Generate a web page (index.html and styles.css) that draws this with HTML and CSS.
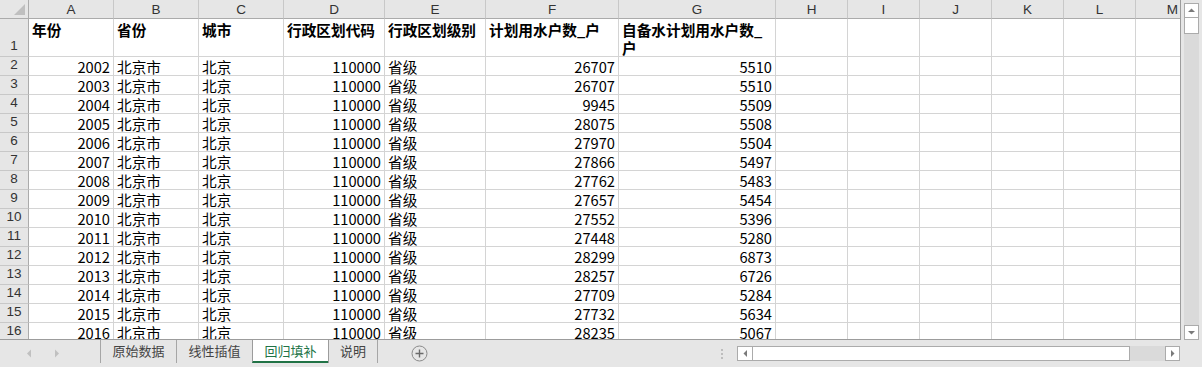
FILE: index.html
```html
<!DOCTYPE html>
<html lang="zh-CN">
<head>
<meta charset="utf-8">
<title>回归填补</title>
<link rel="stylesheet" href="styles.css">
</head>
<body>
<div class="app">
  <div class="main">
    <div class="sheet">
      <div class="row head">
        <div class="corner"><svg width="28" height="18" viewBox="0 0 28 18"><polygon points="14,15 25,15 25,4" fill="#bfbfbf"/></svg></div>
        <div>A</div><div>B</div><div>C</div><div>D</div><div>E</div><div>F</div><div>G</div><div>H</div><div>I</div><div>J</div><div>K</div><div>L</div><div class="m">M</div>
      </div>
      <div class="row r1">
        <div class="rh">1</div>
        <div>年份</div><div>省份</div><div>城市</div><div>行政区划代码</div><div>行政区划级别</div><div>计划用水户数_户</div><div>自备水计划用水户数_<br>户</div><div></div><div></div><div></div><div></div><div></div><div></div>
      </div>
      <div class="row"><div class="rh">2</div><div class="n">2002</div><div>北京市</div><div>北京</div><div class="n">110000</div><div>省级</div><div class="n">26707</div><div class="n">5510</div><div></div><div></div><div></div><div></div><div></div><div></div></div>
      <div class="row"><div class="rh">3</div><div class="n">2003</div><div>北京市</div><div>北京</div><div class="n">110000</div><div>省级</div><div class="n">26707</div><div class="n">5510</div><div></div><div></div><div></div><div></div><div></div><div></div></div>
      <div class="row"><div class="rh">4</div><div class="n">2004</div><div>北京市</div><div>北京</div><div class="n">110000</div><div>省级</div><div class="n">9945</div><div class="n">5509</div><div></div><div></div><div></div><div></div><div></div><div></div></div>
      <div class="row"><div class="rh">5</div><div class="n">2005</div><div>北京市</div><div>北京</div><div class="n">110000</div><div>省级</div><div class="n">28075</div><div class="n">5508</div><div></div><div></div><div></div><div></div><div></div><div></div></div>
      <div class="row"><div class="rh">6</div><div class="n">2006</div><div>北京市</div><div>北京</div><div class="n">110000</div><div>省级</div><div class="n">27970</div><div class="n">5504</div><div></div><div></div><div></div><div></div><div></div><div></div></div>
      <div class="row"><div class="rh">7</div><div class="n">2007</div><div>北京市</div><div>北京</div><div class="n">110000</div><div>省级</div><div class="n">27866</div><div class="n">5497</div><div></div><div></div><div></div><div></div><div></div><div></div></div>
      <div class="row"><div class="rh">8</div><div class="n">2008</div><div>北京市</div><div>北京</div><div class="n">110000</div><div>省级</div><div class="n">27762</div><div class="n">5483</div><div></div><div></div><div></div><div></div><div></div><div></div></div>
      <div class="row"><div class="rh">9</div><div class="n">2009</div><div>北京市</div><div>北京</div><div class="n">110000</div><div>省级</div><div class="n">27657</div><div class="n">5454</div><div></div><div></div><div></div><div></div><div></div><div></div></div>
      <div class="row"><div class="rh">10</div><div class="n">2010</div><div>北京市</div><div>北京</div><div class="n">110000</div><div>省级</div><div class="n">27552</div><div class="n">5396</div><div></div><div></div><div></div><div></div><div></div><div></div></div>
      <div class="row"><div class="rh">11</div><div class="n">2011</div><div>北京市</div><div>北京</div><div class="n">110000</div><div>省级</div><div class="n">27448</div><div class="n">5280</div><div></div><div></div><div></div><div></div><div></div><div></div></div>
      <div class="row"><div class="rh">12</div><div class="n">2012</div><div>北京市</div><div>北京</div><div class="n">110000</div><div>省级</div><div class="n">28299</div><div class="n">6873</div><div></div><div></div><div></div><div></div><div></div><div></div></div>
      <div class="row"><div class="rh">13</div><div class="n">2013</div><div>北京市</div><div>北京</div><div class="n">110000</div><div>省级</div><div class="n">28257</div><div class="n">6726</div><div></div><div></div><div></div><div></div><div></div><div></div></div>
      <div class="row"><div class="rh">14</div><div class="n">2014</div><div>北京市</div><div>北京</div><div class="n">110000</div><div>省级</div><div class="n">27709</div><div class="n">5284</div><div></div><div></div><div></div><div></div><div></div><div></div></div>
      <div class="row"><div class="rh">15</div><div class="n">2015</div><div>北京市</div><div>北京</div><div class="n">110000</div><div>省级</div><div class="n">27732</div><div class="n">5634</div><div></div><div></div><div></div><div></div><div></div><div></div></div>
      <div class="row"><div class="rh">16</div><div class="n">2016</div><div>北京市</div><div>北京</div><div class="n">110000</div><div>省级</div><div class="n">28235</div><div class="n">5067</div><div></div><div></div><div></div><div></div><div></div><div></div></div>
    </div>
    <div class="vscroll">
      <div class="sbtn"><svg width="13" height="13" viewBox="0 0 13 13"><polygon points="3,8 10,8 6.5,4.5" fill="#7a7a7a"/></svg></div>
      <div class="vthumb"></div>
      <div class="vtrack"></div>
      <div class="sbtn"><svg width="13" height="13" viewBox="0 0 13 13"><polygon points="3,5 10,5 6.5,8.5" fill="#7a7a7a"/></svg></div>
    </div>
  </div>
  <div class="tabbar">
    <div class="nav">
      <svg class="navl" width="6" height="9" viewBox="0 0 6 9"><polygon points="5,0.5 5,8.5 1,4.5" fill="#c0c0c0"/></svg>
      <svg class="navr" width="6" height="9" viewBox="0 0 6 9"><polygon points="1,0.5 1,8.5 5,4.5" fill="#c0c0c0"/></svg>
    </div>
    <div class="tabs">
      <div class="tab">原始数据</div>
      <div class="tab">线性插值</div>
      <div class="tab active">回归填补</div>
      <div class="tab last">说明</div>
    </div>
    <svg class="plus" width="17" height="17" viewBox="0 0 17 17"><circle cx="8.5" cy="8.5" r="7.5" fill="none" stroke="#8a8a8a" stroke-width="1"/><path d="M8.5 4.5v8M4.5 8.5h8" stroke="#6a6a6a" stroke-width="1.4"/></svg>
    <div class="dots"><i></i><i></i><i></i></div>
    <div class="hscroll">
      <div class="hbtn"><svg width="13" height="13" viewBox="0 0 13 13"><polygon points="8,3 8,10 4.5,6.5" fill="#7a7a7a"/></svg></div>
      <div class="hthumb"></div>
      <div class="htrack"></div>
      <div class="hbtn right"><svg width="13" height="13" viewBox="0 0 13 13"><polygon points="5,3 5,10 8.5,6.5" fill="#7a7a7a"/></svg></div>
    </div>
  </div>
</div>
</body>
</html>
```
FILE: styles.css
```css
* { box-sizing: border-box; }
html, body { margin: 0; padding: 0; }
body {
  background: #e6e6e6;
  font-family: "Noto Sans CJK SC", "Noto Sans", sans-serif;
  color: #000;
}
.app { width: 1202px; height: 367px; overflow: hidden; display: flex; flex-direction: column; }
.main { display: flex; height: 340px; }
.sheet {
  width: 1181px;
  height: 340px;
  background: #fff;
  border-right: 1px solid #9c9c9c;
  border-bottom: 1px solid #9c9c9c;
  overflow: hidden;
}
.row {
  display: grid;
  grid-template-columns: 29px 85px 85px 85px 101px 101px 133px 157px 72px 72px 72px 72px 72px 44px;
  height: 19px;
  font-size: 14.67px;
}
.row > div {
  border-right: 1px solid #d4d4d4;
  border-bottom: 1px solid #d4d4d4;
  padding: 0 3px;
  display: flex;
  align-items: flex-end;
  line-height: 16px;
  white-space: nowrap;
  overflow: hidden;
}
.row > div:last-child { border-right: none; }
.row > .n { justify-content: flex-end; padding-right: 3px; }
.row > .rh {
  background: #e6e6e6;
  border-right: 1px solid #ababab;
  border-bottom: 1px solid #c8c8c8;
  justify-content: center;
  font-family: "Liberation Sans", sans-serif;
  font-size: 13.5px;
  color: #333;
  padding: 0 0 2px 0;
}
.head > div {
  background: #e6e6e6;
  border-right: 1px solid #c8c8c8;
  border-bottom: 1px solid #ababab;
  justify-content: center;
  align-items: flex-start;
  font-family: "Liberation Sans", sans-serif;
  font-size: 13.5px;
  color: #333;
  padding: 1px 0 0 0;
  line-height: 18px;
}
.head > .m { justify-content: flex-end; padding-right: 2px; }
.head > .corner { border-right: 1px solid #ababab; padding: 0; display: block; }
.corner svg { display: block; }
.r1 { height: 38px; }
.r1 > div {
  align-items: flex-start;
  font-weight: bold;
  line-height: 18px;
  padding-top: 2px;
}
.r1 > .rh { align-items: flex-end; font-weight: normal; line-height: 16px; padding-top: 0; }

.vscroll {
  width: 21px;
  height: 340px;
  padding: 3px 0 0 3px;
  display: flex;
  flex-direction: column;
}
.vscroll > div { width: 15px; }
.sbtn {
  height: 15px;
  background: #fff;
  border: 1px solid #ababab;
  display: flex; align-items: center; justify-content: center;
}
.vthumb { height: 17px; background: #fff; border: 1px solid #ababab; margin-top: -1px; }
.vtrack { flex: 1; background: #dadada; }

.tabbar { height: 27px; display: flex; align-items: center; font-size: 13px; }
.nav { width: 100px; height: 27px; position: relative; display: flex; align-items: center; }
.navl { margin-left: 26px; }
.navr { margin-left: 22px; }
.tabs { display: flex; align-self: flex-start; height: 23px; }
.tab {
  width: 76px;
  height: 23px;
  border-left: 1px solid #a6a6a6;
  color: #444;
  display: flex; align-items: center; justify-content: center;
  line-height: 20px;
  padding-bottom: 1px;
}
.tab.last { width: 50px; border-right: 1px solid #a6a6a6; }
.tab.active {
  background: #fff;
  color: #217346;
  border-left: 1px solid #9c9c9c;
  border-bottom: 2px solid #217346;
  padding-bottom: 0;
}
.tab.active + .tab { border-left-color: #9c9c9c; }
.plus { margin-left: 33px; display: block; }
.dots { margin-left: 293px; display: flex; flex-direction: column; gap: 2px; }
.dots i { display: block; width: 2px; height: 2px; background: #bdbdbd; }
.hscroll { margin-left: 14px; width: 443px; height: 15px; display: flex; margin-top: -1px; }
.hbtn {
  width: 16px; height: 15px; background: #fff; border: 1px solid #ababab;
  display: flex; align-items: center; justify-content: center;
}
.hbtn.right { width: 15px; }
.hthumb { width: 378px; margin-left: -1px; background: #fff; border: 1px solid #ababab; }
.htrack { flex: 1; background: #dadada; }
```
